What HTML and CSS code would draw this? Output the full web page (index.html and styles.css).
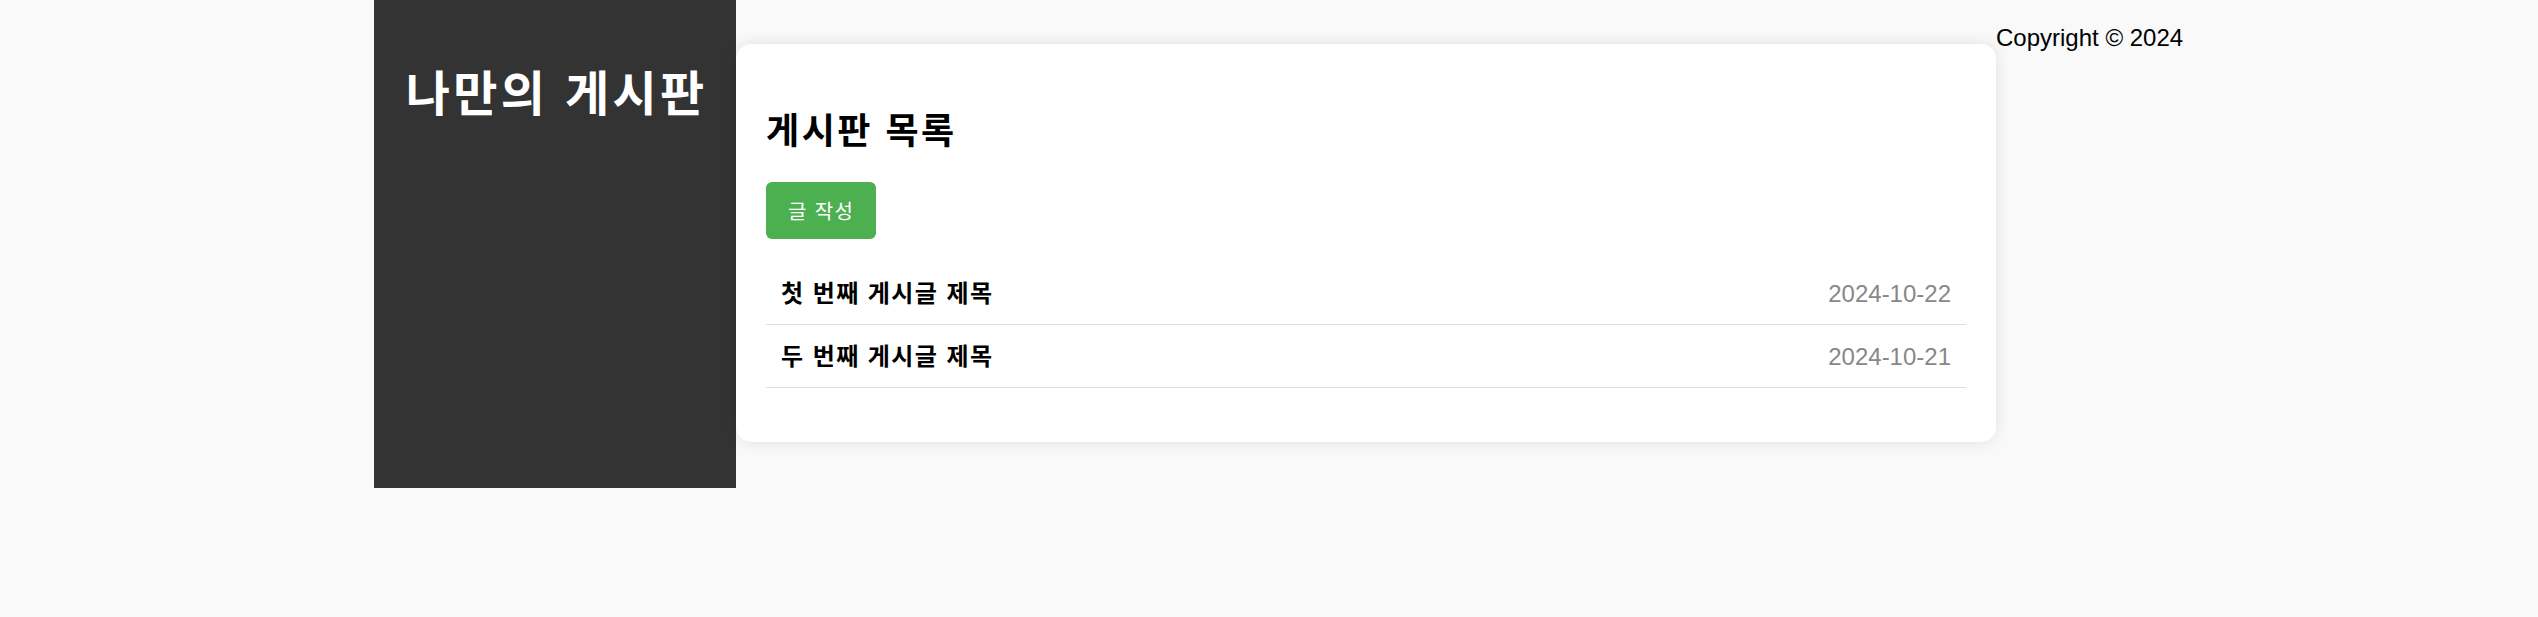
FILE: index.html
```html
<!DOCTYPE html>
<html lang="ko">
<head>
<meta charset="utf-8">
<title>나만의 게시판</title>
<link rel="stylesheet" href="styles.css">
</head>
<body>
<div class="layout">
  <aside class="sidebar">
    <h1 class="site-title">나만의 게시판</h1>
  </aside>
  <main class="card">
    <h2 class="card-title">게시판 목록</h2>
    <div class="actions"><button class="btn-write">글 작성</button></div>
    <ul class="post-list">
      <li class="post"><span class="post-title">첫 번째 게시글 제목</span><span class="post-date">2024-10-22</span></li>
      <li class="post"><span class="post-title">두 번째 게시글 제목</span><span class="post-date">2024-10-21</span></li>
    </ul>
  </main>
  <footer class="footer">Copyright © 2024</footer>
</div>
</body>
</html>
```

FILE: styles.css
```css
html, body {
  margin: 0;
  padding: 0;
  background: #f9f9f9;
  font-family: "Liberation Sans", "Noto Sans CJK KR", sans-serif;
  font-size: 24px;
  color: #000;
}

.layout {
  display: flex;
  align-items: flex-start;
  margin-left: 374px;
}

.sidebar {
  width: 362px;
  height: 488px;
  flex: none;
  background: #333333;
  color: #fff;
  box-sizing: border-box;
  padding-top: 67px;
}

.site-title {
  margin: 0;
  font-size: 48px;
  line-height: 56px;
  font-weight: bold;
  text-align: center;
  letter-spacing: 0.07em;
  text-indent: 0.07em;
}

.card {
  width: 1260px;
  flex: none;
  box-sizing: border-box;
  margin-top: 44px;
  padding: 30px;
  background: #fff;
  border-radius: 15px;
  box-shadow: 0 0 15px rgba(0, 0, 0, 0.1);
}

.card-title {
  margin: 36px 0 0;
  font-size: 36px;
  line-height: 43px;
  font-weight: bold;
  letter-spacing: 0.07em;
}

.actions {
  margin-top: 29px;
}

.btn-write {
  background: #4caf50;
  color: #fff;
  border: none;
  border-radius: 6px;
  padding: 17px 22px 13px;
  font-family: "Liberation Sans", "Noto Sans CJK KR", sans-serif;
  font-size: 20px;
  line-height: 27px;
  letter-spacing: 0.07em;
  cursor: pointer;
}

.post-list {
  list-style: none;
  margin: 23px 0 24px;
  padding: 0;
}

.post {
  display: flex;
  justify-content: space-between;
  align-items: center;
  padding: 16px 15px 14px;
  line-height: 32px;
  border-bottom: 1px solid #ddd;
}

.post-title {
  font-weight: bold;
  letter-spacing: 0.06em;
}

.post-date {
  color: #888;
}

.footer {
  padding-top: 24px;
  font-size: 24px;
  line-height: 27px;
  white-space: nowrap;
}
```
